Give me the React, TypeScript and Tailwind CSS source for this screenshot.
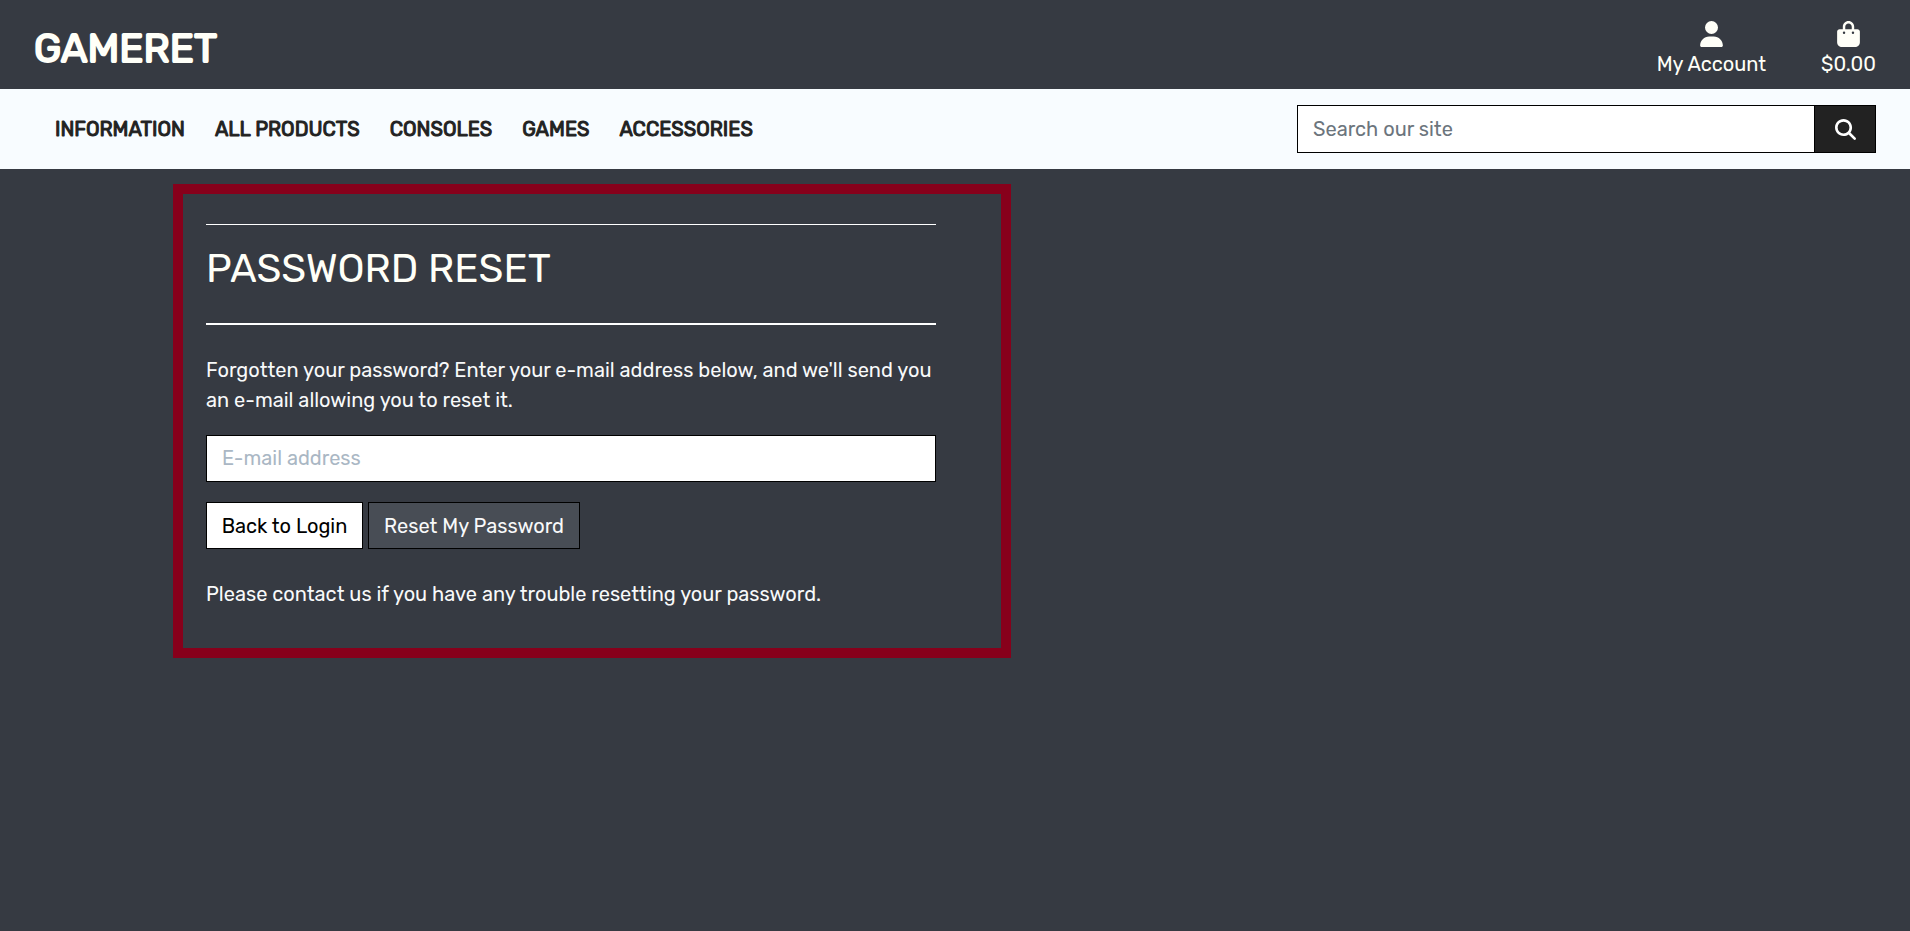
import { FaBagShopping, FaMagnifyingGlass, FaUser } from "react-icons/fa6";

const navLinks = ["Information", "All Products", "Consoles", "Games", "Accessories"];

function SiteHeader() {
  return (
    <header className="flex h-[89px] items-center justify-between px-[34px] text-[#fffff8]">
      <a
        href="#home"
        className="pt-2 text-[40px] leading-[48px] uppercase [-webkit-text-stroke:2px_#fffff8]"
      >
        Gameret
      </a>
      <div className="flex gap-[55px] pt-[11px]">
        <a href="#account" className="flex flex-col items-center gap-[2px]">
          <FaUser className="h-[26px] w-[23px]" aria-hidden="true" />
          <span className="leading-[30px]">My Account</span>
        </a>
        <a href="#bag" className="flex flex-col items-center gap-[2px]">
          <FaBagShopping className="h-[26px] w-[23px]" aria-hidden="true" />
          <span className="leading-[30px]">$0.00</span>
        </a>
      </div>
    </header>
  );
}

function NavBar() {
  return (
    <div className="flex h-20 items-center justify-between bg-[#f8fcff] pr-[34px] pl-[55px]">
      <nav>
        <ul className="flex gap-[30px] leading-[30px] text-[#222222] uppercase [-webkit-text-stroke:1px_#222222]">
          {navLinks.map((label) => (
            <li key={label}>
              <a href={`#${label}`}>{label}</a>
            </li>
          ))}
        </ul>
      </nav>
      <form role="search" className="flex h-12 w-[579px] border border-black">
        <input
          type="search"
          aria-label="Search our site"
          placeholder="Search our site"
          className="min-w-0 flex-1 bg-white px-[15px] text-black outline-none placeholder:text-[#6c757d]"
        />
        <button
          type="submit"
          aria-label="Search"
          className="flex w-[61px] items-center justify-center border-l border-black bg-[#222222] text-white"
        >
          <FaMagnifyingGlass className="size-[21px]" aria-hidden="true" />
        </button>
      </form>
    </div>
  );
}

function PasswordReset() {
  return (
    <section className="mt-[15px] ml-[173px] w-[838px] border-[10px] border-[#87001b] pt-[30px] pr-[65px] pb-[39px] pl-[23px]">
      <hr className="border-t border-white" />
      <h1 className="mt-5 text-[40px] leading-[48px] text-[#fffff8] uppercase">Password Reset</h1>
      <hr className="mt-[30px] border-t-2 border-white" />
      <p className="mt-[30px] leading-[30px]">
        Forgotten your password? Enter your e-mail address below, and we'll send you an e-mail
        allowing you to reset it.
      </p>
      <form className="mt-5">
        <input
          type="email"
          aria-label="E-mail address"
          placeholder="E-mail address"
          className="block h-[47px] w-full border border-black bg-white px-[15px] pb-[2px] text-black outline-none placeholder:text-[#aab7c4]"
        />
        <div className="mt-5 flex h-[47px] gap-[5px]">
          <a
            href="#login"
            className="flex w-[157px] items-center justify-center border border-black bg-white text-black"
          >
            Back to Login
          </a>
          <button type="submit" className="w-[212px] border border-black bg-[#484d55]">
            Reset My Password
          </button>
        </div>
      </form>
      <p className="mt-[30px] leading-[30px]">
        Please contact us if you have any trouble resetting your password.
      </p>
    </section>
  );
}

export default function App() {
  return (
    <div className="min-h-screen bg-[#363a42] pb-10 font-['Rubik','Roboto',sans-serif] text-xl text-[#f8f9fa]">
      <SiteHeader />
      <NavBar />
      <main>
        <PasswordReset />
      </main>
    </div>
  );
}
